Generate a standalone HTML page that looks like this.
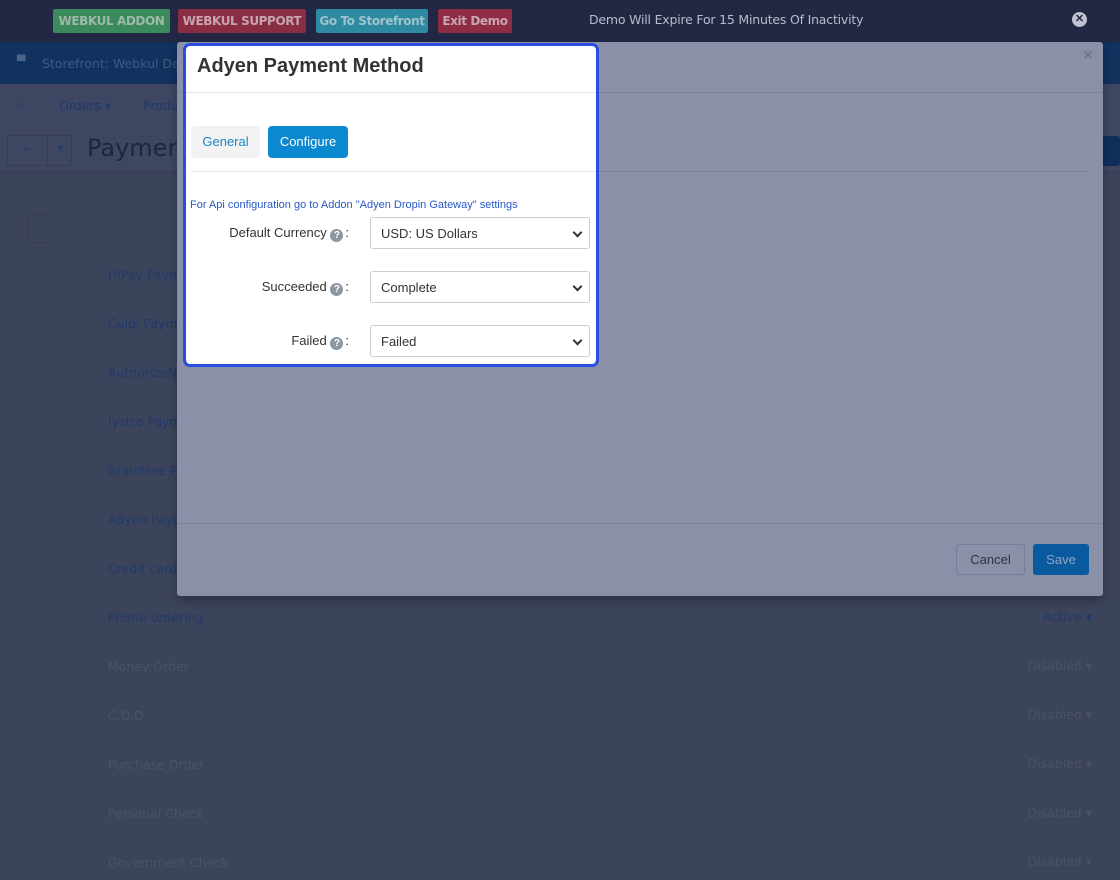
<!DOCTYPE html>
<html><head><meta charset="utf-8"><style>
*{box-sizing:border-box;margin:0;padding:0}
body{width:1120px;height:880px;overflow:hidden;background:#3c445c;font-family:"Liberation Sans",sans-serif;position:relative}
.abs{position:absolute}
.top{left:0;top:0;width:1120px;height:42px;background:#222844}
.btn{position:absolute;top:9px;height:24px;line-height:24px;font-size:12px;font-weight:bold;text-align:center;overflow:hidden;white-space:nowrap;font-family:"DejaVu Sans","Liberation Sans",sans-serif;letter-spacing:-0.4px;border-radius:2px}
.sf{left:0;top:42px;width:1120px;height:42px;background:#11325f}
.nav{left:0;top:84px;width:1120px;height:88px;background:#3e4661;border-bottom:1px solid #363d55}
.ub{font-family:"DejaVu Sans",sans-serif}
.item{position:absolute;left:108px;font-size:12.5px;font-family:"DejaVu Sans",sans-serif;color:#1f3a6a}
.dis{color:#4a5269}
.st{position:absolute;right:28px;font-size:12.5px;font-family:"DejaVu Sans",sans-serif;color:#4a5269}
.dlg{left:177px;top:42px;width:926px;height:554px;background:#8990a8;border-radius:3px;box-shadow:0 4px 10px rgba(0,0,0,.3)}
.hl{left:183px;top:43px;width:416px;height:324px;background:#fff;border:3px solid #2a4de0;border-radius:7px}
.lbl{position:absolute;right:247px;font-size:13px;color:#333;text-align:right;white-space:nowrap}
.q{display:inline-block;width:13px;height:13px;border-radius:50%;background:#8b97a3;color:#fff;font-size:10px;line-height:13px;text-align:center;font-weight:bold;vertical-align:-1px;margin:0 2px 0 0}
.sel{position:absolute;left:184px;width:220px;height:32px;border:1px solid #ccc;border-radius:3px;font-size:13px;color:#333;padding:0 10px;line-height:32px}
.sel:after{content:"";position:absolute;right:8px;top:11px;width:5px;height:5px;border-right:2px solid #333;border-bottom:2px solid #333;transform:rotate(45deg)}
</style></head><body>
<div class="abs top"></div>
<div class="btn" style="left:53px;width:117px;background:#3a8a5e;color:#9fb9a9">WEBKUL ADDON</div>
<div class="btn" style="left:178px;width:128px;background:#8a2c43;color:#c7a5b0">WEBKUL SUPPORT</div>
<div class="btn" style="left:316px;width:112px;background:#2e8aa0;color:#9fc3cc">Go To Storefront</div>
<div class="btn" style="left:438px;width:74px;background:#8f2c45;color:#c8a5b0">Exit Demo</div>
<div class="abs ub" style="left:589px;top:12px;font-size:12.5px;color:#b9bccb;letter-spacing:-0.2px">Demo Will Expire For 15 Minutes Of Inactivity</div>
<div class="abs" style="left:1072px;top:12px;width:15px;height:15px;border-radius:50%;background:#c0c3cf;color:#222844;font-size:11px;line-height:15px;text-align:center;font-weight:bold">✕</div>
<div class="abs sf"></div>
<div class="abs ub" style="left:17px;top:55px;font-size:11px;color:#4e6486">▀</div>
<div class="abs ub" style="left:42px;top:56px;font-size:12.5px;color:#3f5a82">Storefront: Webkul De</div>
<div class="abs nav"></div>
<div class="abs" style="left:16px;top:98px;font-size:12px;color:#1f3a6a">⌂</div>
<div class="abs ub" style="left:59px;top:98px;font-size:12.5px;color:#1f3a6a">Orders ▾</div>
<div class="abs ub" style="left:143px;top:98px;font-size:12.5px;color:#1f3a6a">Produ</div>
<div class="abs" style="left:7px;top:135px;width:65px;height:31px;border:1px solid #363d55;border-radius:3px"></div>
<div class="abs" style="left:47px;top:135px;width:1px;height:31px;background:#363d55"></div>
<div class="abs" style="left:20px;top:139px;font-size:16px;color:#1f3a6a;font-weight:bold">←</div>
<div class="abs" style="left:56px;top:143px;font-size:9px;color:#1f3a6a">▼</div>
<div class="abs ub" style="left:87px;top:134px;font-size:24px;color:#1e2540">Payment</div>
<div class="abs" style="left:1100px;top:136px;width:20px;height:30px;background:#0f2f5a;border-radius:3px"></div>
<div class="abs" style="left:28px;top:215px;width:26px;height:28px;border:1px solid #363d55;border-radius:3px"></div>
<div class="item" style="top:267px">HiPay Paym</div>
<div class="item" style="top:316px">Culqi Payme</div>
<div class="item" style="top:365px">AuthorizeN</div>
<div class="item" style="top:414px">Iyzico Paym</div>
<div class="item" style="top:463px">Braintree Pa</div>
<div class="item" style="top:512px">Adyen Paym</div>
<div class="item" style="top:561px">Credit card</div>
<div class="item" style="top:610px">Phone ordering</div>
<div class="st" style="top:609px;color:#1f3a6a">Active ▾</div>
<div class="item dis" style="top:659px">Money Order</div>
<div class="st" style="top:658px">Disabled ▾</div>
<div class="item dis" style="top:708px">C.O.D</div>
<div class="st" style="top:707px">Disabled ▾</div>
<div class="item dis" style="top:757px">Purchase Order</div>
<div class="st" style="top:756px">Disabled ▾</div>
<div class="item dis" style="top:806px">Personal Check</div>
<div class="st" style="top:805px">Disabled ▾</div>
<div class="item dis" style="top:855px">Government Check</div>
<div class="st" style="top:854px">Disabled ▾</div>

<div class="abs dlg">
 <div class="abs" style="left:0;top:50px;width:926px;height:1px;background:#7d849c"></div>
 <div class="abs" style="right:10px;top:6px;font-size:12px;color:#6b7188;font-weight:bold">✕</div>
 <div class="abs" style="left:13px;top:129px;width:898px;height:1px;background:#7d849c"></div>
 <div class="abs" style="left:0;top:481px;width:926px;height:1px;background:#7d849c"></div>
 <div class="abs" style="left:779px;top:502px;width:69px;height:31px;border:1px solid #767d96;border-radius:3px;font-size:13px;color:#2e3446;text-align:center;line-height:29px">Cancel</div>
 <div class="abs" style="left:856px;top:502px;width:56px;height:31px;background:#0a5aa0;border-radius:3px;font-size:13px;color:#8ea3c4;text-align:center;line-height:31px">Save</div>
</div>

<div class="abs hl">
 <div class="abs" style="left:11px;top:9px;font-size:20px;font-weight:bold;color:#333">Adyen Payment Method</div>
 <div class="abs" style="left:0;top:46px;width:410px;height:1px;background:#e5e5e5"></div>
 <div class="abs" style="left:5px;top:80px;width:69px;height:32px;background:#f2f2f2;border-radius:4px;font-size:13px;color:#1a85c8;text-align:center;line-height:32px">General</div>
 <div class="abs" style="left:82px;top:80px;width:80px;height:32px;background:#0b88d0;border-radius:4px;font-size:13px;color:#fff;text-align:center;line-height:32px">Configure</div>
 <div class="abs" style="left:5px;top:125px;width:405px;height:1px;background:#e5e5e5"></div>
 <div class="abs" style="left:4px;top:153px;font-size:11px;color:#2658c8">For Api configuration go to Addon "Adyen Dropin Gateway" settings</div>
 <div class="lbl" style="top:179px">Default Currency <span class="q">?</span>:</div>
 <div class="sel" style="top:171px">USD: US Dollars</div>
 <div class="lbl" style="top:233px">Succeeded <span class="q">?</span>:</div>
 <div class="sel" style="top:225px">Complete</div>
 <div class="lbl" style="top:287px">Failed <span class="q">?</span>:</div>
 <div class="sel" style="top:279px">Failed</div>
</div>
</body></html>
